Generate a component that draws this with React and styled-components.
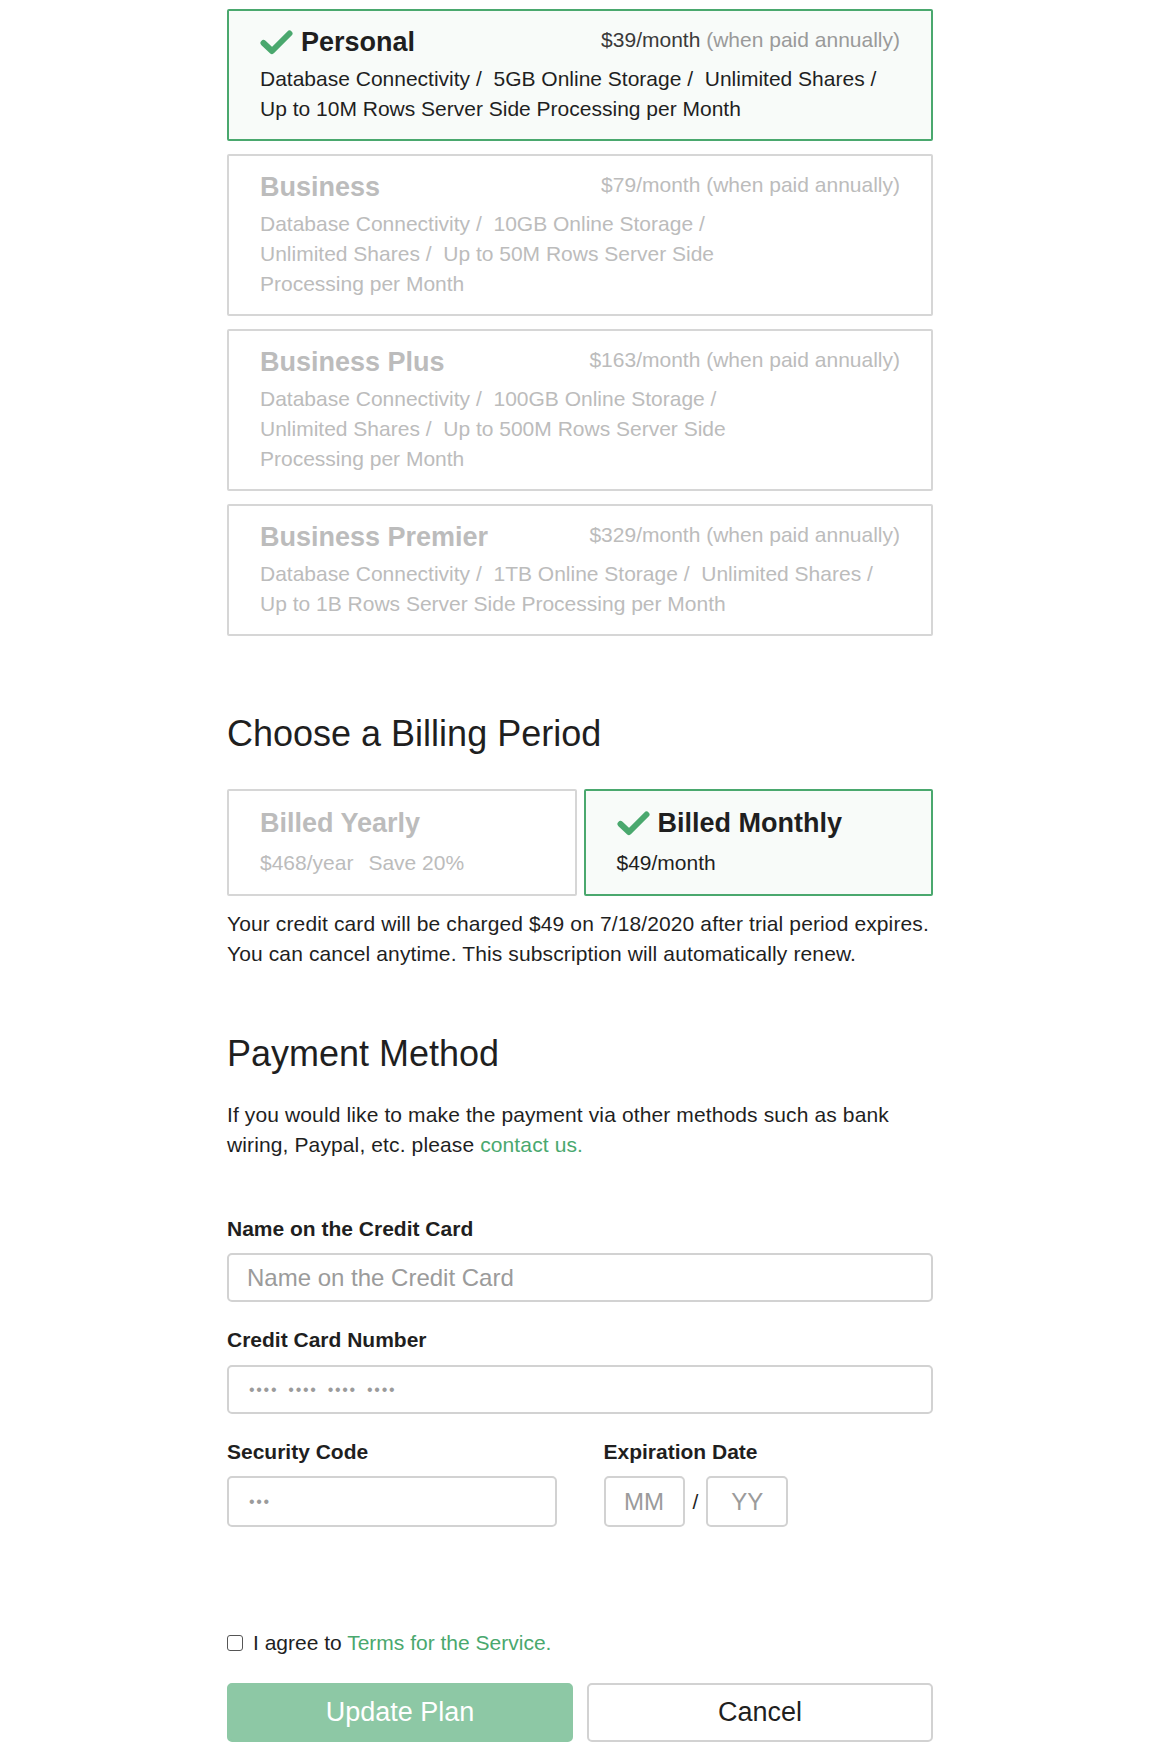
import React from "react";
import styled, { createGlobalStyle } from "styled-components";

const GREEN = "#4aa86e";

const Global = createGlobalStyle`
  html, body { margin: 0; padding: 0; background: #fff; }
  body { font-family: "Liberation Sans", Arial, sans-serif; color: #1f1f1f; }
  * { box-sizing: border-box; }
`;

const Page = styled.div`
  width: 706px;
  margin: 0 auto;
  padding: 9px 0 8px;
`;

const PlanList = styled.div`
  display: flex;
  flex-direction: column;
  gap: 13px;
`;

const Card = styled.div`
  border: 2px solid ${(p) => (p.$active ? GREEN : "#d6d6d6")};
  background: ${(p) => (p.$active ? "#f8fbf9" : "#fff")};
  border-radius: 2px;
  padding: 14px 31px 15px 31px;
  color: ${(p) => (p.$active ? "#1f1f1f" : "#bcbcbc")};
`;

const CardHead = styled.div`
  display: flex;
  justify-content: space-between;
  align-items: flex-start;
`;

const Title = styled.div`
  display: flex;
  align-items: center;
  gap: 8px;
  font-size: 27px;
  font-weight: 700;
  line-height: 35px;
`;

const Price = styled.div`
  font-size: 21px;
  line-height: 30px;
  color: ${(p) => (p.$active ? "#3a3a3a" : "#bcbcbc")};
`;

const Note = styled.span`
  color: ${(p) => (p.$active ? "#9a9a9a" : "inherit")};
`;

const Desc = styled.div`
  margin-top: 4px;
  font-size: 21px;
  line-height: 30px;
`;

const Line = styled.div`
  white-space: pre;
`;

const Heading = styled.h2`
  margin: ${(p) => p.$top}px 0 0;
  font-size: 36px;
  font-weight: 400;
  line-height: 40px;
  color: #1f1f1f;
`;

const PeriodGrid = styled.div`
  margin-top: 35px;
  display: grid;
  grid-template-columns: 1fr 1fr;
  gap: 7px;
`;

const PeriodCard = styled(Card)`
  padding: 15px 31px 16px;
`;

const PeriodPrice = styled.div`
  margin-top: 7px;
  font-size: 21px;
  line-height: 30px;
  color: ${(p) => (p.$active ? "#1f1f1f" : "#bcbcbc")};
`;

const Save = styled.span`
  margin-left: 15px;
`;

const Text = styled.p`
  margin: ${(p) => p.$top || 0}px 0 0;
  font-size: 21px;
  line-height: 30px;
  letter-spacing: 0.12px;
  color: #1f1f1f;
`;

const Link = styled.a`
  color: ${GREEN};
  text-decoration: none;
`;

const Field = styled.div`
  margin-top: ${(p) => p.$top}px;
  display: flex;
  flex-direction: column;
  gap: ${(p) => p.$gap || 9}px;
`;

const Label = styled.label`
  font-size: 21px;
  font-weight: 700;
  line-height: 30px;
  color: #1f1f1f;
`;

const Input = styled.input`
  width: ${(p) => p.$w || "100%"};
  height: ${(p) => p.$h || 49}px;
  border: 2px solid #d2d2d2;
  border-radius: 5px;
  padding: 0 ${(p) => p.$pad || 18}px;
  font-family: "Liberation Sans", Arial, sans-serif;
  font-size: ${(p) => p.$fs || 24}px;
  color: #333;
  text-align: ${(p) => p.$align || "left"};
  outline: none;
  background: #fff;
  &::placeholder {
    color: #9b9b9b;
    letter-spacing: ${(p) => p.$ls || 0}px;
    word-spacing: ${(p) => p.$ws || 0}px;
  }
`;

const TwoCol = styled.div`
  margin-top: 23px;
  display: grid;
  grid-template-columns: 1fr 1fr;
  gap: 47px;
`;

const ExpRow = styled.div`
  display: flex;
  align-items: center;
  gap: 8px;
`;

const Slash = styled.span`
  font-size: 21px;
  color: #1f1f1f;
`;

const AgreeRow = styled.div`
  margin-top: 101px;
  display: flex;
  align-items: center;
  gap: 10px;
  font-size: 21px;
  line-height: 30px;
`;

const Box = styled.span`
  width: 16px;
  height: 16px;
  border: 1.6px solid #555;
  border-radius: 3px;
  background: #fff;
  flex: none;
`;

const Buttons = styled.div`
  margin-top: 25px;
  display: grid;
  grid-template-columns: 1fr 1fr;
  gap: 14px;
`;

const Button = styled.button`
  height: 59px;
  border-radius: 5px;
  font-family: "Liberation Sans", Arial, sans-serif;
  font-size: 27px;
  border: 2px solid ${(p) => (p.$primary ? "#8dc8a5" : "#d2d2d2")};
  background: ${(p) => (p.$primary ? "#8dc8a5" : "#fff")};
  color: ${(p) => (p.$primary ? "#fff" : "#1f1f1f")};
  cursor: pointer;
`;

const Check = () => (
  <svg width="33" height="25" viewBox="0 0 33 25" aria-hidden="true">
    <path d="M3.5 13 L12 21 L29.5 3.5" fill="none" stroke={GREEN} strokeWidth="6" strokeLinecap="round" strokeLinejoin="round" />
  </svg>
);

const plans = [
  {
    name: "Personal",
    price: "$39/month",
    active: true,
    lines: ["Database Connectivity /  5GB Online Storage /  Unlimited Shares /", "Up to 10M Rows Server Side Processing per Month"],
  },
  {
    name: "Business",
    price: "$79/month",
    lines: ["Database Connectivity /  10GB Online Storage /", "Unlimited Shares /  Up to 50M Rows Server Side", "Processing per Month"],
  },
  {
    name: "Business Plus",
    price: "$163/month",
    lines: ["Database Connectivity /  100GB Online Storage /", "Unlimited Shares /  Up to 500M Rows Server Side", "Processing per Month"],
  },
  {
    name: "Business Premier",
    price: "$329/month",
    lines: ["Database Connectivity /  1TB Online Storage /  Unlimited Shares /", "Up to 1B Rows Server Side Processing per Month"],
  },
];

export default function App() {
  return (
    <>
      <Global />
      <Page>
        <PlanList>
          {plans.map((p) => (
            <Card key={p.name} $active={p.active}>
              <CardHead>
                <Title>
                  {p.active && <Check />}
                  {p.name}
                </Title>
                <Price $active={p.active}>
                  {p.price} <Note $active={p.active}>(when paid annually)</Note>
                </Price>
              </CardHead>
              <Desc>
                {p.lines.map((l) => (
                  <Line key={l}>{l}</Line>
                ))}
              </Desc>
            </Card>
          ))}
        </PlanList>

        <Heading $top={78}>Choose a Billing Period</Heading>
        <PeriodGrid>
          <PeriodCard>
            <Title>Billed Yearly</Title>
            <PeriodPrice>
              $468/year<Save>Save 20%</Save>
            </PeriodPrice>
          </PeriodCard>
          <PeriodCard $active>
            <Title>
              <Check />
              Billed Monthly
            </Title>
            <PeriodPrice $active>$49/month</PeriodPrice>
          </PeriodCard>
        </PeriodGrid>
        <Text $top={13}>
          Your credit card will be charged $49 on 7/18/2020 after trial period expires.
          <br />
          You can cancel anytime. This subscription will automatically renew.
        </Text>

        <Heading $top={65}>Payment Method</Heading>
        <Text $top={26}>
          If you would like to make the payment via other methods such as bank
          <br />
          wiring, Paypal, etc. please <Link href="#">contact us.</Link>
        </Text>

        <Field $top={54}>
          <Label>Name on the Credit Card</Label>
          <Input placeholder="Name on the Credit Card" />
        </Field>
        <Field $top={23} $gap={10}>
          <Label>Credit Card Number</Label>
          <Input placeholder="•••• •••• •••• ••••" $fs={16} $ls={1.7} $ws={4} $pad={20} />
        </Field>
        <TwoCol>
          <Field $top={0}>
            <Label>Security Code</Label>
            <Input placeholder="•••" $fs={16} $ls={1.7} $h={51} $pad={20} />
          </Field>
          <Field $top={0}>
            <Label>Expiration Date</Label>
            <ExpRow>
              <Input placeholder="MM" $w="81px" $h={51} $pad={4} $align="center" />
              <Slash>/</Slash>
              <Input placeholder="YY" $w="82px" $h={51} $pad={4} $align="center" />
            </ExpRow>
          </Field>
        </TwoCol>

        <AgreeRow>
          <Box />
          <span>
            I agree to <Link href="#">Terms for the Service.</Link>
          </span>
        </AgreeRow>
        <Buttons>
          <Button $primary>Update Plan</Button>
          <Button>Cancel</Button>
        </Buttons>
      </Page>
    </>
  );
}
